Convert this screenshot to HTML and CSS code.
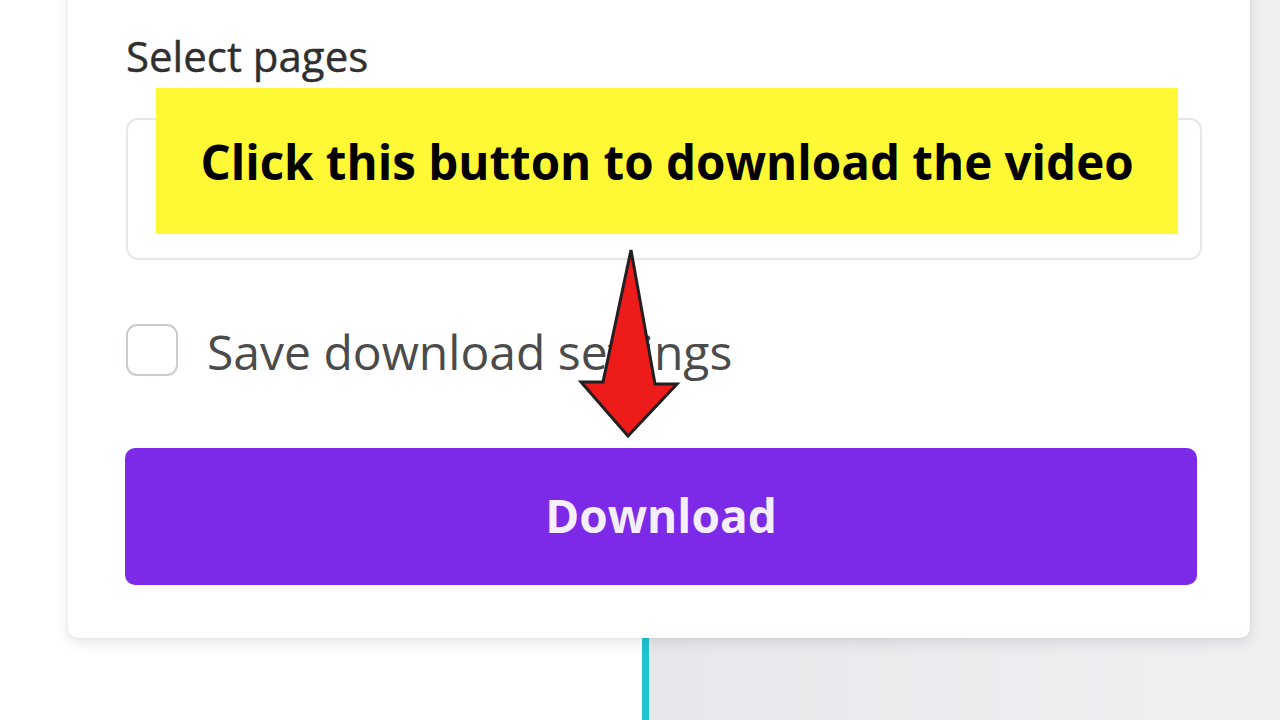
FILE: index.html
```html
<!DOCTYPE html>
<html lang="en">

<head>
    <meta charset="UTF-8">
    <meta name="viewport" content="width=device-width, initial-scale=1.0">
    <title>Download</title>
    <link rel="stylesheet" href="styles.css">
</head>

<body>
    <!-- editor background: side panel + canvas -->
    <div class="editor">
        <div class="side-panel"></div>
        <div class="canvas-area"></div>
    </div>

    <!-- download popup -->
    <div class="popup">
        <div class="field-label">Select pages</div>
        <div class="select-box"></div>

        <label class="check-row">
            <span class="check"></span>
            <span class="check-text">Save download settings</span>
        </label>

        <button type="button" class="download-btn">Download</button>
    </div>

    <!-- tutorial callout -->
    <div class="callout">Click this button to download the video</div>

    <svg class="arrow" width="110" height="200" viewBox="0 0 110 200">
        <polygon points="56,5 80,139 102,139 53,191 6,137 28,137" fill="#ee1b1b" stroke="#231f20"
            stroke-width="3" stroke-linejoin="miter" />
    </svg>
</body>

</html>
```

FILE: styles.css
```css
* {
    margin: 0;
    padding: 0;
    box-sizing: border-box;
}

body {
    width: 1280px;
    height: 720px;
    overflow: hidden;
    position: relative;
    font-family: "Open Sans", "Liberation Sans", sans-serif;
    background-color: #ffffff;
}

.editor {
    display: flex;
    height: 720px;
}

.side-panel {
    width: 649px;
    background-color: #ffffff;
    border-right: 7px solid #20c4d0;
}

.canvas-area {
    flex: 1;
    background: linear-gradient(90deg, #e6e8eb, #eef0f2);
}

/* popup card */
.popup {
    position: absolute;
    left: 68px;
    top: -20px;
    width: 1182px;
    height: 658px;
    background-color: #ffffff;
    border-radius: 10px;
    box-shadow: 0 4px 14px rgba(30, 40, 60, 0.12), 0 0 3px rgba(30, 40, 60, 0.08);
    padding: 53px 48px 0 58px;
    display: flex;
    flex-direction: column;
}

.field-label {
    font-size: 42px;
    line-height: 46px;
    font-weight: 400;
    color: #2f2f2f;
    -webkit-text-stroke: 0.4px #2f2f2f;
}

.select-box {
    margin-top: 39px;
    height: 142px;
    border: 2px solid #e5e7ea;
    border-radius: 12px;
}

.check-row {
    margin-top: 64px;
    display: flex;
    align-items: center;
    gap: 29px;
}

.check {
    width: 52px;
    height: 52px;
    border: 2px solid #c9ccd0;
    border-radius: 11px;
}

.check-text {
    font-size: 48px;
    line-height: 52px;
    color: #4b4b4b;
    position: relative;
    top: 2px;
}

.download-btn {
    margin-top: 72px;
    margin-right: 5px;
    margin-left: -1px;
    height: 137px;
    border: none;
    border-radius: 10px;
    background-color: #7d2ae8;
    color: #f5eefd;
    font-family: "Open Sans", "Liberation Sans", sans-serif;
    font-size: 46px;
    font-weight: 700;
    padding-bottom: 3px;
}

/* yellow tutorial label */
.callout {
    position: absolute;
    left: 156px;
    top: 88px;
    width: 1022px;
    height: 146px;
    background-color: #fff935;
    display: flex;
    align-items: center;
    justify-content: center;
    font-size: 47.5px;
    font-weight: 700;
    color: #000000;
}

.arrow {
    position: absolute;
    left: 575px;
    top: 245px;
}
```
